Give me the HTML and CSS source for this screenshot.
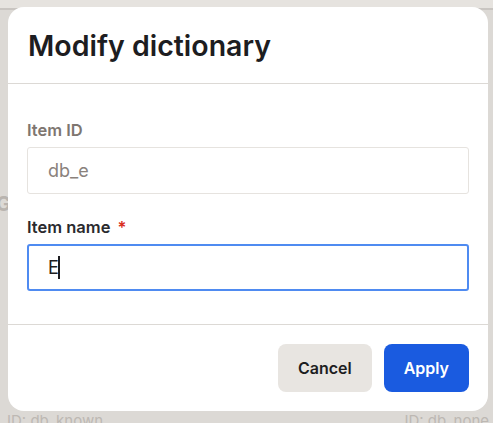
FILE: index.html
```html
<!DOCTYPE html>
<html>
<head>
<meta charset="utf-8">
<link rel="stylesheet" href="styles.css">
</head>
<body>
<div class="page">
  <div class="topbar"></div>
  <div class="bg-row bg-g">G</div>
  <div class="bg-ids"><span>ID: db_known</span><span>ID: db_none</span></div>
</div>
<div class="modal">
  <div class="modal-header"><h1 class="title">Modify dictionary</h1></div>
  <div class="modal-body">
    <div class="field">
      <label class="label muted">Item ID</label>
      <div class="input disabled">db_e</div>
    </div>
    <div class="field">
      <label class="label">Item name <span class="req">*</span></label>
      <div class="input focused">E<span class="caret"></span></div>
    </div>
  </div>
  <div class="modal-footer">
    <button class="btn btn-secondary">Cancel</button>
    <button class="btn btn-primary">Apply</button>
  </div>
</div>
</body>
</html>
```
FILE: styles.css
```css
* { box-sizing: border-box; }
html, body { margin: 0; padding: 0; }
body {
  width: 493px;
  height: 423px;
  overflow: hidden;
  background: #dcd9d5;
  font-family: Inter, "Noto Sans", sans-serif;
  position: relative;
}
.page { width: 493px; height: 423px; position: relative; }
.topbar {
  height: 10px;
  background: #e6e3df;
  border-bottom: 2px solid #c9c5c1;
}
.bg-row {
  color: #b9b4af;
  font-weight: 700;
  font-size: 20px;
}
.bg-g { position: absolute; left: -4px; top: 192px; }
.bg-ids {
  position: absolute;
  left: 7px; right: 4px; bottom: -7px;
  display: flex;
  justify-content: space-between;
  color: #bdb8b3;
  font-size: 15px;
}
.modal {
  position: absolute;
  left: 8px;
  top: 7px;
  width: 480px;
  height: 404px;
  background: #fff;
  border-radius: 16px;
  display: flex;
  flex-direction: column;
  overflow: hidden;
}
.modal-header {
  height: 77px;
  padding: 0 20px;
  display: flex;
  align-items: center;
  border-bottom: 1px solid #dcd9d5;
}
.title {
  margin: 0;
  font-size: 28.5px;
  font-weight: 600;
  color: #1d1d21;
  letter-spacing: 0;
}
.modal-body {
  flex: 1;
  padding: 36px 19px 0 19px;
  display: flex;
  flex-direction: column;
  gap: 23px;
  border-bottom: 1px solid #dcd9d5;
}
.field { display: flex; flex-direction: column; gap: 7px; }
.label {
  font-size: 16.5px;
  font-weight: 600;
  color: #2a2a2e;
  line-height: 20px;
}
.label.muted { color: #7e7670; }
.req { color: #d92d20; margin-left: 3px; }
.input {
  height: 47px;
  border: 1px solid #e6e3df;
  border-radius: 3px;
  padding: 0 20px;
  display: flex;
  align-items: center;
  font-size: 18px;
  color: #1d1d21;
}
.input.disabled { color: #8a827c; }
.input.focused { border: 2px solid #4f8bf1; padding: 0 19px; }
.caret {
  display: inline-block;
  width: 2px;
  height: 23px;
  background: #1d1d21;
  margin-left: -1px;
}
.modal-footer {
  height: 86px;
  padding: 0 19px 0 20px;
  display: flex;
  align-items: center;
  justify-content: flex-end;
  gap: 12px;
}
.btn {
  height: 48px;
  border: none;
  border-radius: 8px;
  font-family: Inter, "Noto Sans", sans-serif;
  font-size: 16px;
  font-weight: 600;
  padding: 0 20px;
}
.btn-secondary { background: #e8e5e1; color: #1d1d21; }
.btn-primary { background: #1a5be0; color: #fff; padding: 0 20px; }
```
